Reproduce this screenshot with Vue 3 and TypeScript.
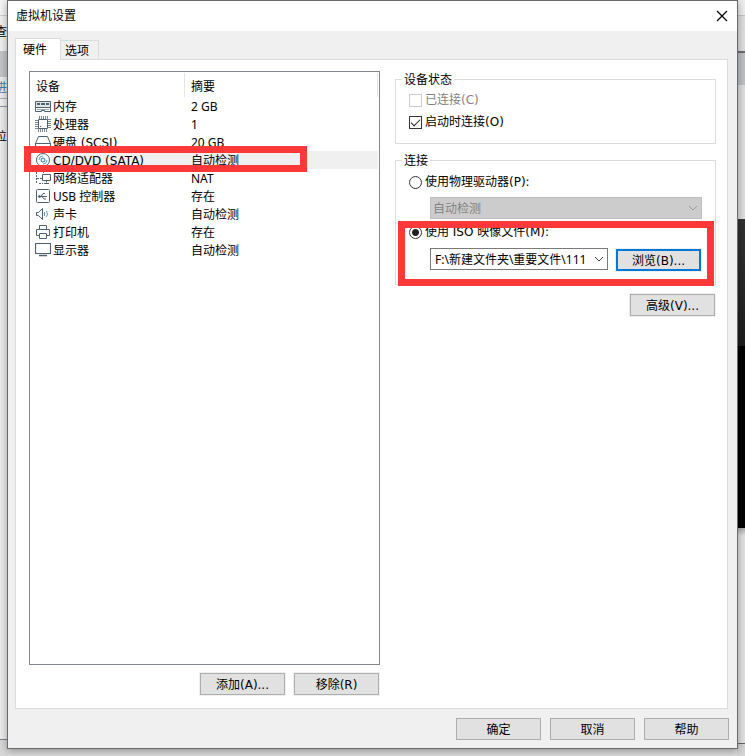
<script setup lang="ts">
import { ref } from 'vue'

interface Device {
  icon: string
  name: string
  summary: string
  wide?: boolean
}

const devices: Device[] = [
  { icon: 'memory', name: '内存', summary: '2 GB' },
  { icon: 'cpu', name: '处理器', summary: '1' },
  { icon: 'disk', name: '硬盘 (SCSI)', summary: '20 GB', wide: true },
  { icon: 'cd', name: 'CD/DVD (SATA)', summary: '自动检测', wide: true },
  { icon: 'network', name: '网络适配器', summary: 'NAT' },
  { icon: 'usb', name: 'USB 控制器', summary: '存在' },
  { icon: 'sound', name: '声卡', summary: '自动检测' },
  { icon: 'printer', name: '打印机', summary: '存在' },
  { icon: 'display', name: '显示器', summary: '自动检测' },
]

const selected = ref(3)
const startConnected = ref(true)
const source = ref('iso')
const isoPath = ref('F:\\新建文件夹\\重要文件\\111')
</script>

<template>
  <div class="screen">
    <div class="backdrop" aria-hidden="true">
      <div class="edge edge-left">
        <div class="l-title"></div>
        <div class="l-menu"><span>查看</span></div>
        <div class="l-tabs"></div>
        <div class="l-link"><span>进行</span></div>
        <div class="l-rule"></div>
        <div class="l-body"><span>位</span></div>
        <div class="l-status"></div>
      </div>
      <div class="edge edge-right">
        <div class="r-title"></div>
        <div class="r-menu"></div>
        <div class="r-tabs"></div>
        <div class="r-pane"></div>
        <div class="r-screen"></div>
        <div class="r-black"></div>
        <div class="r-rest"></div>
        <div class="r-status"></div>
      </div>
    </div>

    <main class="dialog">
      <header class="titlebar">
        <h1>虚拟机设置</h1>
        <button class="close" type="button" aria-label="关闭">
          <svg width="12" height="12" viewBox="0 0 12 12"><path d="M1 1l10 10M11 1L1 11" fill="none" stroke="#000" stroke-width="1.2" /></svg>
        </button>
      </header>

      <div class="body">
        <nav class="tabs">
          <button class="tab active" type="button">硬件</button>
          <button class="tab" type="button">选项</button>
        </nav>

        <section class="panel">
          <div class="left">
            <div class="list">
              <table>
                <thead>
                  <tr><th class="c-name">设备</th><th>摘要</th></tr>
                </thead>
                <tbody>
                  <tr v-for="(d, i) in devices" :key="d.name" :class="{ selected: i === selected }" @click="selected = i">
                    <td class="c-name">
                      <div class="device">
                        <svg class="icon" width="16" height="16" viewBox="0 0 16 16" fill="none" stroke="#4d6270">
                          <template v-if="d.icon === 'memory'">
                            <path d="M.5 3.5h15v6H.5z" fill="#dfe5e8" />
                            <path d="M2 5h3v2H2zM6 5h4v2H6zM11 5h3v2h-3z" fill="#4d6270" stroke="none" />
                            <path d="M.5 9.500v4h6v-1h3v1h6v-4" />
                            <path d="M2 11.500h12" stroke="#9aa8b0" />
                          </template>
                          <template v-else-if="d.icon === 'cpu'">
                            <path d="M3.500 3.500h9v9h-9z" />
                            <path d="M4.500 0v3M6.500 0v3M8.500 0v3M10.500 0v3M12.500 0v3M3.500 13v3M5.500 13v3M7.500 13v3M9.500 13v3M11.500 13v3M0 4.500h3M0 6.500h3M0 8.500h3M0 10.500h3M0 12.500h3M13 3.500h3M13 5.500h3M13 7.500h3M13 9.500h3M13 11.500h3" stroke-opacity=".75" />
                            <path d="M5 10h1v1H5z" fill="#4d6270" stroke="none" />
                          </template>
                          <template v-else-if="d.icon === 'disk'">
                            <path d="M3.500 2.500h9l3 7v4H.5v-4zM.5 9.500h15" />
                          </template>
                          <template v-else-if="d.icon === 'cd'">
                            <circle cx="8" cy="8" r="6.500" />
                            <circle cx="8" cy="8" r="2" stroke="#1f7fb8" />
                            <path d="M4 8a4 4 0 0 1 4-4M12 8a4 4 0 0 1-4 4" stroke="#64a6cc" />
                          </template>
                          <template v-else-if="d.icon === 'network'">
                            <path d="M7.500 4.500h8v6h-8zM11.500 10.500v2M9 13.500h5" />
                            <path d="M1.500 7V1.500h7V4M1.500 8v6M2 8.500h5M4 13.500h4" stroke-dasharray="2 1" />
                          </template>
                          <template v-else-if="d.icon === 'usb'">
                            <rect x="1.500" y="1.500" width="13" height="13" rx="1" />
                            <path d="M4 8.500h8M6 8.500l2-3h2M7 8.500l2 2.500h2" />
                            <circle cx="4.500" cy="8.500" r="1" fill="#4d6270" />
                          </template>
                          <template v-else-if="d.icon === 'sound'">
                            <path d="M1.500 6.500h2l4-4v11l-4-4h-2z" />
                            <path d="M9.500 6v4M11.500 5q2 3 0 6" stroke="#6f9db8" />
                          </template>
                          <template v-else-if="d.icon === 'printer'">
                            <path d="M4.500 5.500v-4h7v4M4.500 11.500h-3v-6h13v6h-3M4.500 9.500h7v5h-7z" />
                          </template>
                          <template v-else>
                            <path d="M.5 1.500h15v10H.5z" stroke-width="1.200" />
                            <path d="M4 13.500h8" stroke-width="1.500" />
                          </template>
                        </svg>
                        <span class="label" :class="{ wide: d.wide }">{{ d.name }}</span>
                      </div>
                    </td>
                    <td class="c-sum">{{ d.summary }}</td>
                  </tr>
                </tbody>
              </table>
            </div>
            <div class="actions">
              <button class="btn" type="button">添加(A)...</button>
              <button class="btn" type="button">移除(R)</button>
            </div>
          </div>

          <div class="right">
            <fieldset>
              <legend>设备状态</legend>
              <label class="option disabled"><input type="checkbox" disabled />已连接(C)</label>
              <label class="option"><input v-model="startConnected" type="checkbox" />启动时连接(O)</label>
            </fieldset>

            <fieldset class="connection">
              <legend>连接</legend>
              <label class="option"><input v-model="source" type="radio" name="source" value="physical" />使用物理驱动器(P):</label>
              <div class="combo off">
                <select disabled aria-label="物理驱动器"><option>自动检测</option></select>
                <svg class="chev" width="10" height="6" viewBox="0 0 10 6"><path d="M1 1l4 4 4-4" fill="none" stroke="#9a9a9a" /></svg>
              </div>
              <label class="option"><input v-model="source" type="radio" name="source" value="iso" />使用 ISO 映像文件(M):</label>
              <div class="iso">
                <div class="combo">
                  <select v-model="isoPath" aria-label="ISO 映像文件"><option>{{ isoPath }}</option></select>
                  <svg class="chev" width="10" height="6" viewBox="0 0 10 6"><path d="M1 1l4 4 4-4" fill="none" stroke="#404040" /></svg>
                </div>
                <button class="btn primary" type="button">浏览(B)...</button>
              </div>
              <div class="mark mark-iso"></div>
            </fieldset>

            <button class="btn advanced" type="button">高级(V)...</button>
          </div>
          <div class="mark mark-device"></div>
        </section>

        <footer class="footer">
          <button class="btn" type="button">确定</button>
          <button class="btn" type="button">取消</button>
          <button class="btn" type="button">帮助</button>
        </footer>
      </div>
    </main>
  </div>
</template>

<style>
body {
  margin: 0;
}
</style>

<style scoped>
.screen,
.screen * {
  box-sizing: border-box;
}
.screen {
  position: relative;
  display: flex;
  min-height: 100vh;
  padding: 0 7px 7px;
  overflow: hidden;
  background: #dcdcdc;
  color: #000;
  font: 12px/18px 'Noto Sans', 'Noto Sans CJK SC', sans-serif;
}
button,
select,
input {
  margin: 0;
  color: inherit;
  font: inherit;
}

/* Main window visible around the dialog */
.backdrop {
  position: absolute;
  inset: 0;
  display: flex;
  justify-content: space-between;
}
.edge {
  display: flex;
  flex-direction: column;
  width: 8px;
  overflow: hidden;
}
.edge span {
  display: block;
  width: 24px;
  margin-left: -5px;
}
.l-title { height: 16px; background: #f4f4f4; border-bottom: 1px solid #cfcfcf; }
.l-menu { height: 35px; padding-top: 7px; background: #f0f0f0; }
.l-tabs { height: 26px; background: #c4c5c8; }
.l-link { height: 22px; padding-top: 2px; background: #ececec; border-bottom: 1px solid #a9adb8; color: #4a78a8; }
.l-rule { height: 8px; background: #f0f0f0; border-bottom: 1px solid #8e94a8; }
.l-body { flex: 1; padding-top: 21px; background: #ededed; }
.l-status { height: 17px; background: #d8d8d8; border-top: 1px solid #7c8088; }
.r-title { height: 16px; background: #eee; border-bottom: 1px solid #c4c4c4; }
.r-menu { height: 37px; background: #dfdfdf; border-bottom: 2px solid #6b6b6b; }
.r-tabs { height: 32px; background: #bfc0c3; }
.r-pane { height: 134px; background: #dedede; }
.r-screen { height: 127px; background: linear-gradient(#333, #1d1d1d); }
.r-black { height: 182px; background: #000; }
.r-rest { flex: 1; background: linear-gradient(#aaa, #e2e2e2 8px); border-bottom: 1px solid #666; }
.r-status { height: 12px; background: #d4d4d4; }

.dialog {
  position: relative;
  flex: 1;
  display: flex;
  flex-direction: column;
  min-width: 0;
  border: 1px solid #6a6a6a;
  background: #f0f0f0;
  box-shadow: 0 2px 8px rgba(0, 0, 0, 0.35);
}
.titlebar {
  display: flex;
  align-items: center;
  justify-content: space-between;
  height: 30px;
  padding: 0 8px;
  background: #fff;
}
h1 {
  margin: 0;
  font-size: 12px;
  font-weight: 400;
}
.close {
  display: flex;
  padding: 1px;
  border: 0;
  background: none;
}
.body {
  flex: 1;
  display: flex;
  flex-direction: column;
  padding: 7px 8px 8px 7px;
}
.tabs {
  display: flex;
  align-items: flex-end;
}
.tab {
  height: 19px;
  padding: 2px 9px 0 4px;
  border: 1px solid #dcdcdc;
  border-width: 1px 1px 0 0;
  background: #f0f0f0;
  line-height: 16px;
}
.tab.active {
  position: relative;
  z-index: 1;
  height: 22px;
  margin-bottom: -1px;
  padding: 0 13px 0 7px;
  border-width: 1px 1px 0 1px;
  background: #fff;
  line-height: 20px;
}
.panel {
  position: relative;
  flex: 1;
  display: grid;
  grid-template-columns: 351fr 321fr;
  gap: 15px;
  margin-right: 1px;
  padding: 11px 11px 13px 13px;
  border: 1px solid #dcdcdc;
  background: #fff;
}
.left {
  display: flex;
  flex-direction: column;
  gap: 8px;
  min-width: 0;
}
.list {
  flex: 1;
  padding: 1px 1px 0 0;
  border: 1px solid #828790;
}
table {
  width: 100%;
  border-collapse: separate;
  border-spacing: 0;
  table-layout: fixed;
}
th {
  height: 24px;
  padding: 4px 6px 0;
  border-right: 1px solid #e5e5e5;
  font-weight: 400;
  text-align: left;
}
.c-name {
  width: 155px;
}
td {
  height: 18px;
  padding: 0;
}
.c-sum {
  padding: 2px 0 0 6px;
  line-height: 16px;
}
.device {
  display: flex;
  align-items: center;
  height: 18px;
  padding-left: 5px;
}
.icon {
  flex: none;
}
.label {
  flex: 1;
  height: 18px;
  padding: 2px 0 0 2px;
  line-height: 16px;
  white-space: nowrap;
}
.wide,
.btn,
.option {
  font-family: 'DejaVu Sans', 'Noto Sans CJK SC', sans-serif;
}
.selected .label,
.selected .c-sum {
  background: #f0f0f0;
}
.actions,
.footer {
  display: flex;
  justify-content: flex-end;
  gap: 9px;
}
.actions {
  padding-right: 1px;
}
.footer {
  padding-top: 9px;
}
.btn {
  width: 85px;
  height: 22px;
  padding: 3px 0 0;
  border: 1px solid #adadad;
  background: #e1e1e1;
  line-height: 17px;
}
.panel .btn {
  outline: 1px solid #f0f0f0;
}
.panel .btn.primary {
  margin-top: 1px;
  border: 2px solid #0078d7;
  line-height: 15px;
}
.right {
  display: flex;
  flex-direction: column;
  gap: 8px;
  min-width: 0;
}
fieldset {
  position: relative;
  min-width: 0;
  margin: 0;
  padding: 2px 13px 10px;
  border: 1px solid #dcdcdc;
}
fieldset.connection {
  padding: 3px 13px 13px;
}
legend {
  height: 16px;
  margin-left: -7px;
  padding: 1px 2px 0;
  line-height: 16px;
}
.option {
  display: flex;
  align-items: center;
  gap: 3px;
  height: 22px;
}
.option.disabled {
  color: #838383;
}
.option input {
  appearance: none;
  width: 13px;
  height: 13px;
  border: 1px solid #333;
  background: #fff;
}
.option input:disabled {
  border-color: #ccc;
}
.option input[type='checkbox']:checked::before {
  content: '';
  display: block;
  width: 8px;
  height: 4px;
  margin: 2px 1px;
  border: solid #222;
  border-width: 0 0 1px 1px;
  transform: rotate(-45deg);
}
.option input[type='radio'] {
  border-radius: 50%;
}
.option input[type='radio']:checked {
  background: radial-gradient(circle, #222 3px, #fff 4px);
}
.combo {
  flex: 1;
  display: grid;
  align-items: center;
  min-width: 0;
  height: 22px;
  border: 1px solid #7a7a7a;
  background: #fff;
}
.combo > * {
  grid-area: 1 / 1;
}
.combo.off {
  margin: 4px 0 2px 21px;
  border-color: #bfbfbf;
  background: #ccc;
  color: #838383;
}
.combo select {
  appearance: none;
  width: 100%;
  height: 20px;
  padding: 1px 18px 0 4px;
  border: 0;
  background: none;
  opacity: 1;
}
.combo.off select {
  padding: 2px 18px 0 2px;
}
.chev {
  justify-self: end;
  margin-right: 3px;
  pointer-events: none;
}
.iso {
  display: flex;
  gap: 8px;
  margin: 5px 1px 0 21px;
}
.advanced {
  align-self: flex-end;
  margin: 1px 1px 0 0;
}

/* Red highlight boxes drawn over the dialog */
.mark {
  position: absolute;
  border: 7px solid #fd3838;
  pointer-events: none;
}
.mark-device {
  left: 8px;
  top: 86px;
  width: 283px;
  height: 26px;
}
.mark-iso {
  inset: 53px 1px -2px 2px;
}
</style>
